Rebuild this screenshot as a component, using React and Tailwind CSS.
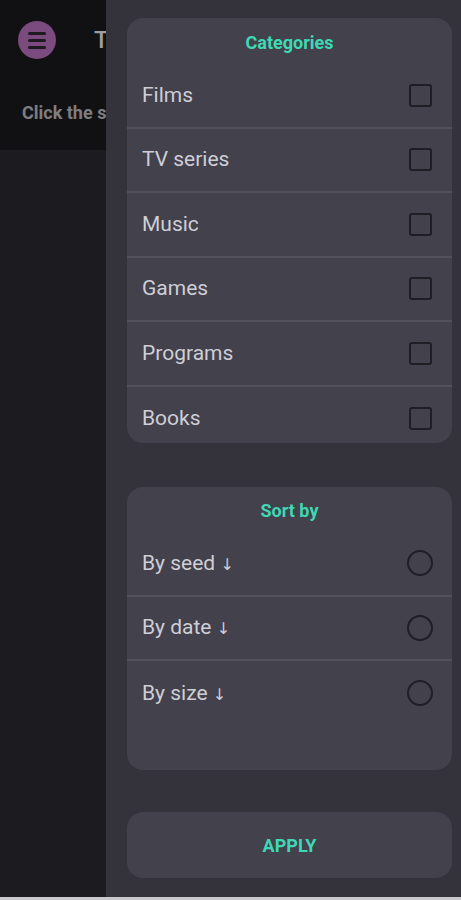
import React, { useState } from 'react';

const categories = ['Films', 'TV series', 'Music', 'Games', 'Programs', 'Books'];
const sorts = ['By seed', 'By date', 'By size'];

function Checkbox({ checked }) {
  return (
    <div className="w-[23px] h-[23px] rounded-[3px] border-2 border-[#1f1e25] flex items-center justify-center">
      {checked && <div className="w-3 h-3 bg-[#3fd8b4] rounded-sm" />}
    </div>
  );
}

function Radio({ checked }) {
  return (
    <div className="w-[26px] h-[26px] rounded-full border-2 border-[#1f1e25] flex items-center justify-center">
      {checked && <div className="w-3 h-3 bg-[#3fd8b4] rounded-full" />}
    </div>
  );
}

export default function App() {
  const [selected, setSelected] = useState([]);
  const [sort, setSort] = useState(null);

  const toggle = (name) => {
    setSelected((prev) => (prev.includes(name) ? prev.filter((n) => n !== name) : [...prev, name]));
  };

  return (
    <div className="w-[461px] h-[900px] overflow-hidden bg-[#c9c9cb] font-['Roboto','Liberation_Sans',sans-serif] flex flex-col">
      <div className="h-[897px] flex flex-row">
        {/* Видимая часть страницы под шторкой */}
        <div className="w-[106px] shrink-0 overflow-hidden bg-[#1c1b20]">
          <div className="h-[150px] bg-[#111113] flex flex-col">
            <div className="flex items-center gap-[38px] pl-[18px] pt-[21px] whitespace-nowrap">
              <button className="w-[38px] h-[38px] shrink-0 rounded-full bg-[#7b4a7f] flex flex-col items-center justify-center gap-[4px]">
                <span className="block w-[18px] h-[3px] rounded bg-[#1d1a1f]" />
                <span className="block w-[18px] h-[3px] rounded bg-[#1d1a1f]" />
                <span className="block w-[18px] h-[3px] rounded bg-[#1d1a1f]" />
              </button>
              <h1 className="text-[24px] font-medium text-[#9d9ca2]">Torrents</h1>
            </div>
            <p className="pl-[22px] mt-[40px] text-[18px] font-bold text-[#7e7d82] whitespace-nowrap">
              Click the search button
            </p>
          </div>
        </div>

        {/* Шторка фильтров */}
        <div className="flex-1 bg-[#34333c] pl-[21px] pr-[9px] pt-[18px] flex flex-col">
          <div className="bg-[#42414c] rounded-[16px] h-[425px] overflow-hidden flex flex-col">
            <div className="h-[46px] shrink-0 pt-[2px] flex items-center justify-center text-[18px] font-bold text-[#3fd8b4]">
              Categories
            </div>
            {categories.map((name, i) => (
              <div
                key={name}
                onClick={() => toggle(name)}
                className={`h-[64.5px] shrink-0 flex items-center justify-between pl-[15px] pr-[20px] ${
                  i < categories.length - 1 ? 'border-b-2 border-[#52515b]' : ''
                }`}
              >
                <span className="text-[21px] text-[#cfced6]">{name}</span>
                <Checkbox checked={selected.includes(name)} />
              </div>
            ))}
          </div>

          <div className="mt-[44px] bg-[#42414c] rounded-[16px] h-[283px] flex flex-col">
            <div className="h-[45px] shrink-0 pt-[2px] flex items-center justify-center text-[18px] font-bold text-[#3fd8b4]">
              Sort by
            </div>
            {sorts.map((name, i) => (
              <div
                key={name}
                onClick={() => setSort(name)}
                className={`h-[64.5px] shrink-0 flex items-center justify-between pl-[15px] pr-[19px] ${
                  i < sorts.length - 1 ? 'border-b-2 border-[#52515b]' : ''
                }`}
              >
                <span className="text-[21px] text-[#cfced6]">
                  {name} <span className="font-['DejaVu_Sans',sans-serif] text-[16px] text-[#cfced6]">↓</span>
                </span>
                <Radio checked={sort === name} />
              </div>
            ))}
          </div>

          <button className="mt-[42px] h-[66px] bg-[#42414c] rounded-[16px] text-[18px] font-bold text-[#3fd8b4]">
            APPLY
          </button>
        </div>
      </div>
    </div>
  );
}
